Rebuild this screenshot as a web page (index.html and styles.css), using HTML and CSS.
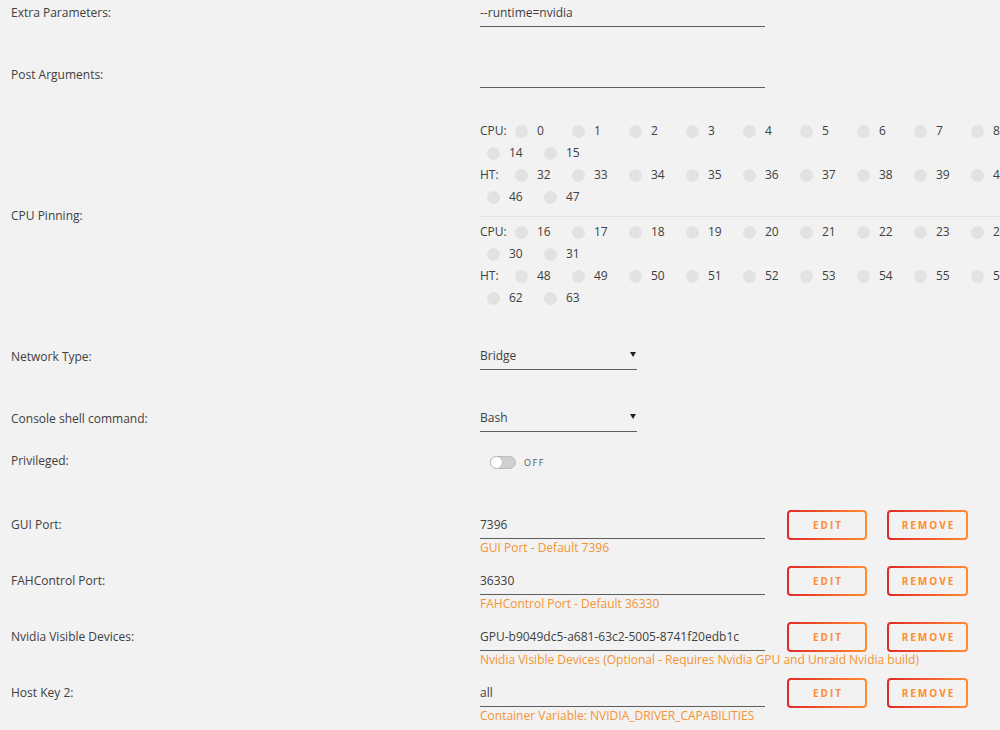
FILE: index.html
```html
<!DOCTYPE html>
<html>
<head>
<meta charset="utf-8">
<link rel="stylesheet" href="styles.css">
</head>
<body>
<div class="form">
  <div class="row r1">
    <div class="label">Extra Parameters:</div>
    <div class="field"><input class="text" type="text" value="--runtime=nvidia"></div>
  </div>
  <div class="row r2">
    <div class="label">Post Arguments:</div>
    <div class="field"><input class="text" type="text" value=""></div>
  </div>
  <div class="row r3 pin-row">
    <div class="label">CPU Pinning:</div>
    <div class="pinning">
      <div class="group">
        <div class="line"><span class="tag">CPU:</span><span class="cb"><i></i>0</span><span class="cb"><i></i>1</span><span class="cb"><i></i>2</span><span class="cb"><i></i>3</span><span class="cb"><i></i>4</span><span class="cb"><i></i>5</span><span class="cb"><i></i>6</span><span class="cb"><i></i>7</span><span class="cb"><i></i>8</span><span class="cb"><i></i>9</span><span class="cb"><i></i>10</span><span class="cb"><i></i>11</span><span class="cb"><i></i>12</span><span class="cb"><i></i>13</span><span class="cb"><i></i>14</span><span class="cb"><i></i>15</span></div>
        <div class="line"><span class="tag">HT:</span><span class="cb"><i></i>32</span><span class="cb"><i></i>33</span><span class="cb"><i></i>34</span><span class="cb"><i></i>35</span><span class="cb"><i></i>36</span><span class="cb"><i></i>37</span><span class="cb"><i></i>38</span><span class="cb"><i></i>39</span><span class="cb"><i></i>40</span><span class="cb"><i></i>41</span><span class="cb"><i></i>42</span><span class="cb"><i></i>43</span><span class="cb"><i></i>44</span><span class="cb"><i></i>45</span><span class="cb"><i></i>46</span><span class="cb"><i></i>47</span></div>
      </div>
      <div class="group second">
        <div class="line"><span class="tag">CPU:</span><span class="cb"><i></i>16</span><span class="cb"><i></i>17</span><span class="cb"><i></i>18</span><span class="cb"><i></i>19</span><span class="cb"><i></i>20</span><span class="cb"><i></i>21</span><span class="cb"><i></i>22</span><span class="cb"><i></i>23</span><span class="cb"><i></i>24</span><span class="cb"><i></i>25</span><span class="cb"><i></i>26</span><span class="cb"><i></i>27</span><span class="cb"><i></i>28</span><span class="cb"><i></i>29</span><span class="cb"><i></i>30</span><span class="cb"><i></i>31</span></div>
        <div class="line"><span class="tag">HT:</span><span class="cb"><i></i>48</span><span class="cb"><i></i>49</span><span class="cb"><i></i>50</span><span class="cb"><i></i>51</span><span class="cb"><i></i>52</span><span class="cb"><i></i>53</span><span class="cb"><i></i>54</span><span class="cb"><i></i>55</span><span class="cb"><i></i>56</span><span class="cb"><i></i>57</span><span class="cb"><i></i>58</span><span class="cb"><i></i>59</span><span class="cb"><i></i>60</span><span class="cb"><i></i>61</span><span class="cb"><i></i>62</span><span class="cb"><i></i>63</span></div>
      </div>
    </div>
  </div>
  <div class="row r4">
    <div class="label">Network Type:</div>
    <div class="field"><div class="select"><span>Bridge</span><span class="arrow"></span></div></div>
  </div>
  <div class="row r5">
    <div class="label">Console shell command:</div>
    <div class="field"><div class="select"><span>Bash</span><span class="arrow"></span></div></div>
  </div>
  <div class="row r6">
    <div class="label">Privileged:</div>
    <div class="field toggle-field"><span class="toggle"><span class="knob"></span></span><span class="toggle-text">OFF</span></div>
  </div>
  <div class="row r7 var-row">
    <div class="label">GUI Port:</div>
    <div class="var">
      <div class="var-input">
        <input class="text" type="text" value="7396">
        <div class="desc">GUI Port - Default 7396</div>
      </div>
      <button class="btn">EDIT</button>
      <button class="btn">REMOVE</button>
    </div>
  </div>
  <div class="row r8 var-row">
    <div class="label">FAHControl Port:</div>
    <div class="var">
      <div class="var-input">
        <input class="text" type="text" value="36330">
        <div class="desc">FAHControl Port - Default 36330</div>
      </div>
      <button class="btn">EDIT</button>
      <button class="btn">REMOVE</button>
    </div>
  </div>
  <div class="row r8 var-row">
    <div class="label">Nvidia Visible Devices:</div>
    <div class="var">
      <div class="var-input">
        <input class="text" type="text" value="GPU-b9049dc5-a681-63c2-5005-8741f20edb1c">
        <div class="desc">Nvidia Visible Devices (Optional - Requires Nvidia GPU and Unraid Nvidia build)</div>
      </div>
      <button class="btn">EDIT</button>
      <button class="btn">REMOVE</button>
    </div>
  </div>
  <div class="row r8 var-row">
    <div class="label">Host Key 2:</div>
    <div class="var">
      <div class="var-input">
        <input class="text" type="text" value="all">
        <div class="desc">Container Variable: NVIDIA_DRIVER_CAPABILITIES</div>
      </div>
      <button class="btn">EDIT</button>
      <button class="btn">REMOVE</button>
    </div>
  </div>
</div>
</body>
</html>
```
FILE: styles.css
```css
html, body {
  margin: 0;
  padding: 0;
  overflow: hidden;
  background: #f2f2f2;
}
body {
  font-family: "Open Sans", "Liberation Sans", sans-serif;
  font-size: 12px;
  color: #404040;
  width: 1000px;
  height: 730px;
}
.form {
  padding-left: 11px;
}
.row {
  display: grid;
  grid-template-columns: 469px auto;
  align-items: start;
}
.label {
  line-height: 24px;
  padding-top: 1px;
  white-space: nowrap;
}
.r2 .label, .r4 .label, .r5 .label, .r6 .label { padding-top: 2px; }
.r2 { margin-top: 34px; }
.r3 { margin-top: 32px; }
.r4 { margin-top: 34px; }
.r5 { margin-top: 35px; }
.r6 { margin-top: 15px; }
.r7 { margin-top: 35px; }
.r8 { margin-top: 10px; }

.text {
  display: block;
  box-sizing: border-box;
  width: 285px;
  height: 27px;
  margin: 0;
  padding: 0 0 2px 0;
  border: none;
  border-bottom: 1px solid #5e5e5e;
  background: transparent;
  font-family: inherit;
  font-size: 12px;
  color: #404040;
  outline: none;
}

/* CPU pinning */
.pin-row { align-items: center; }
.pin-row .label { align-self: center; padding-top: 3px; }
.pinning {
  width: 900px;
}
.group {
  padding-bottom: 8px;
  border-bottom: 1px solid #e2e2e2;
}
.group.second {
  padding-top: 4px;
  padding-bottom: 0;
  border-bottom: none;
}
.line {
  display: flex;
  flex-wrap: wrap;
  width: 860px;
  line-height: 22px;
}
.tag {
  width: 28px;
}
.cb {
  display: flex;
  align-items: center;
  width: 57px;
}
.cb i {
  display: block;
  width: 13px;
  height: 13px;
  border-radius: 50%;
  background: #e2e2e2;
  margin-left: 7px;
  margin-right: 9px;
}

/* select */
.select {
  box-sizing: border-box;
  width: 157px;
  height: 27px;
  padding-bottom: 1px;
  border-bottom: 1px solid #5e5e5e;
  display: flex;
  align-items: center;
  justify-content: space-between;
}
.arrow {
  width: 0;
  height: 0;
  border-left: 3px solid transparent;
  border-right: 3px solid transparent;
  border-top: 5px solid #222;
  margin-right: 1px;
  margin-bottom: 2px;
}

/* toggle */
.toggle-field {
  display: flex;
  align-items: center;
  height: 26px;
  padding-left: 10px;
  padding-top: 2px;
}
.toggle {
  box-sizing: border-box;
  width: 26px;
  height: 13px;
  border-radius: 7px;
  background: #cfcfcf;
  border: 1px solid #bdbdbd;
  position: relative;
}
.knob {
  position: absolute;
  left: -1px;
  top: -1px;
  width: 13px;
  height: 13px;
  box-sizing: border-box;
  border-radius: 50%;
  background: #fff;
  border: 1px solid #bdbdbd;
}
.toggle-text {
  margin-left: 8px;
  font-size: 9px;
  letter-spacing: 1.6px;
  color: #555;
}

/* env vars */
.var-row .label { margin-top: 2px; }
.var {
  display: flex;
  align-items: flex-start;
}
.var-input {
  padding-top: 2px;
  width: 285px;
}
.desc {
  margin-top: 1px;
  line-height: 16px;
  color: #f29434;
  white-space: nowrap;
}
.btn {
  box-sizing: border-box;
  width: 80px;
  height: 30px;
  margin-left: 22px;
  padding: 0 0 0 2px;
  border: 2px solid transparent;
  border-radius: 4px;
  background: linear-gradient(#f2f2f2, #f2f2f2) padding-box, linear-gradient(90deg, #e22828, #ff8c2f) border-box;
  font-family: inherit;
  font-size: 10px;
  font-weight: bold;
  letter-spacing: 2px;
  color: #ff8c2f;
  cursor: pointer;
}
.btn + .btn {
  margin-left: 20px;
  width: 81px;
}
```
